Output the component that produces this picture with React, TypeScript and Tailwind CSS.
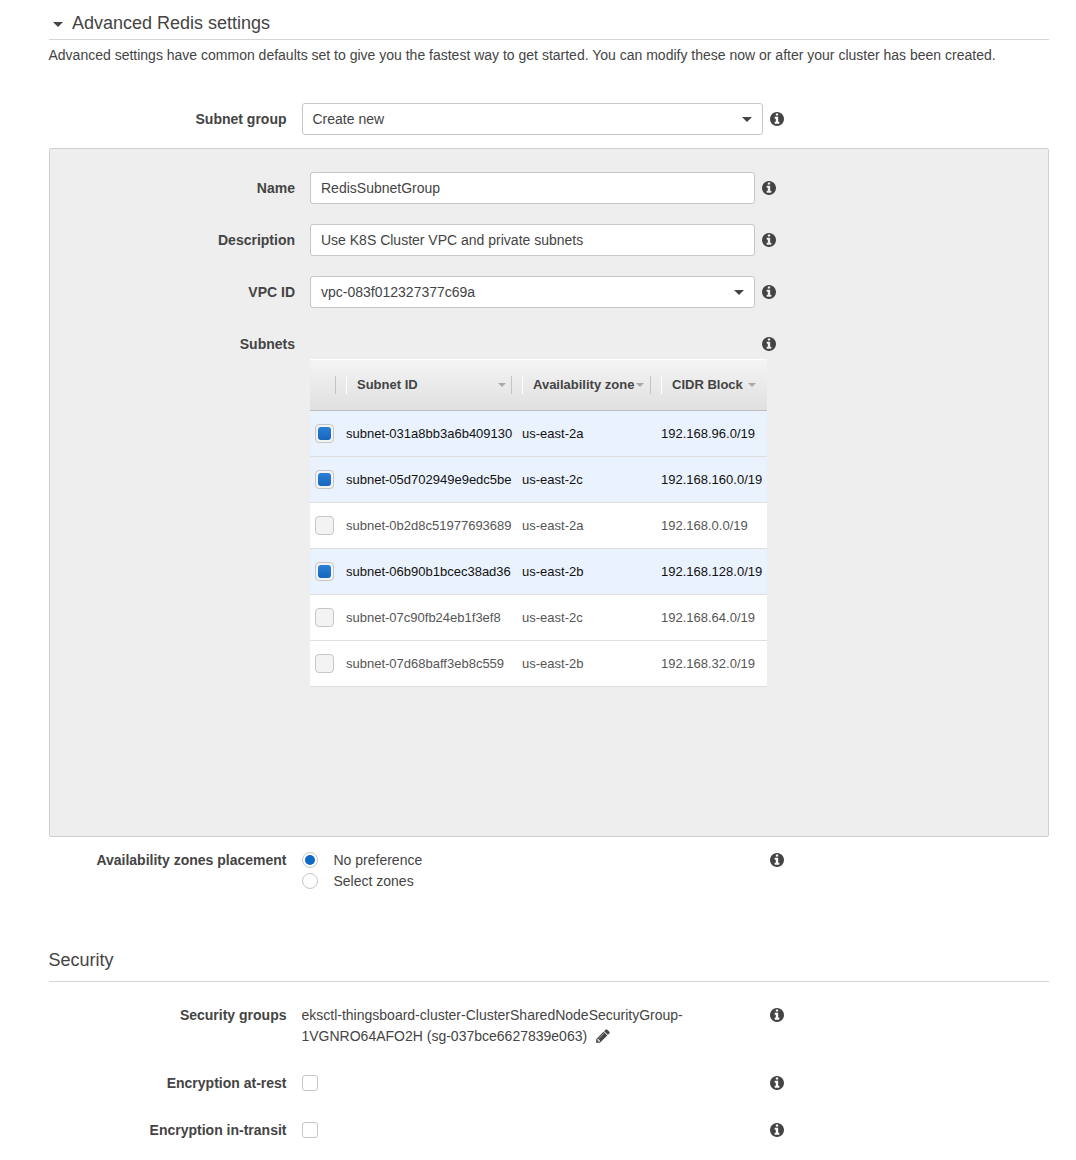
import React from "react";

const Info = () => (
  <svg viewBox="128 128 1536 1536" className="w-[14px] h-[14px] text-[#444] shrink-0" fill="currentColor">
    <path d="M1152 1376v-160q0-14-9-23t-23-9h-96v-512q0-14-9-23t-23-9h-320q-14 0-23 9t-9 23v160q0 14 9 23t23 9h96v320h-96q-14 0-23 9t-9 23v160q0 14 9 23t23 9h448q14 0 23-9t9-23zm-128-896v-160q0-14-9-23t-23-9h-192q-14 0-23 9t-9 23v160q0 14 9 23t23 9h192q14 0 23-9t9-23zm640 416q0 209-103 385.5t-279.5 279.5-385.5 103-385.5-103-279.5-279.5-103-385.5 103-385.5 279.5-279.5 385.5-103 385.5 103 279.5 279.5 103 385.5z" />
  </svg>
);

const Pencil = () => (
  <svg viewBox="0 0 1792 1792" className="ml-[8px] w-4 h-4 -mt-[2px] text-[#444] shrink-0" fill="currentColor">
    <path d="M491 1536l91-91-235-235-91 91v107h128v128h107zm523-928q0-22-22-22-10 0-17 7l-542 542q-7 7-7 17 0 22 22 22 10 0 17-7l542-542q7-7 7-17zm-54-192l416 416-832 832h-416v-416zm683 96q0 53-37 90l-166 166-416-416 166-165q36-38 90-38 53 0 91 38l235 234q37 39 37 91z" />
  </svg>
);

const Caret = ({ className }: { className: string }) => (
  <svg viewBox="0 0 10 5" className={className} fill="currentColor">
    <path d="M0 0h10L5 5z" />
  </svg>
);

const Field = ({ value, select }: { value: string; select?: boolean }) => (
  <div className="h-8 flex-1 flex items-center justify-between bg-white border border-[#c6c6c6] rounded-[3px] pl-[10px] pr-[10px] text-[14px] text-[#444]">
    <span>{value}</span>
    {select && <Caret className="w-[10px] h-[5px] text-[#444]" />}
  </div>
);

const PanelRow = ({ label, children }: { label: string; children: React.ReactNode }) => (
  <div className="flex items-center h-8">
    <div className="w-[245.5px] text-right font-bold text-[14px] text-[#444]">{label}</div>
    <div className="w-[445px] ml-[15px] flex">{children}</div>
    <div className="ml-[7px]"><Info /></div>
  </div>
);

const Row = ({ label, children, top }: { label: string; children: React.ReactNode; top: string }) => (
  <div className={`flex items-center h-5 ${top}`}>
    <div className="w-[238px] text-right font-bold text-[14px] text-[#444]">{label}</div>
    <div className="w-[461px] ml-[15px] flex items-center">{children}</div>
    <div className="ml-[7px]"><Info /></div>
  </div>
);

const Box = () => <div className="w-4 h-4 rounded-[3px] border border-[#c6c6c6] bg-white" />;

const subnets = [
  ["subnet-031a8bb3a6b409130", "us-east-2a", "192.168.96.0/19", true],
  ["subnet-05d702949e9edc5be", "us-east-2c", "192.168.160.0/19", true],
  ["subnet-0b2d8c51977693689", "us-east-2a", "192.168.0.0/19", false],
  ["subnet-06b90b1bcec38ad36", "us-east-2b", "192.168.128.0/19", true],
  ["subnet-07c90fb24eb1f3ef8", "us-east-2c", "192.168.64.0/19", false],
  ["subnet-07d68baff3eb8c559", "us-east-2b", "192.168.32.0/19", false],
] as const;

const HeadSep = () => <div className="h-[18px] w-px bg-[#c4c4c4]" />;

export default function App() {
  return (
    <div className="bg-white h-[1160px] overflow-hidden pt-[11px] pl-[48.5px] w-[1076px] text-[#444] font-['Liberation_Sans',Arial,sans-serif]">
      <div className="w-[1000px]">
        <div className="h-[29px] flex items-start border-b border-[#d5d5d5]">
          <Caret className="w-[10px] h-[5px] text-[#444] ml-[4.5px] mt-[11px]" />
          <span className="ml-[9px] text-[18px] leading-6">Advanced Redis settings</span>
        </div>
        <p className="mt-[5px] text-[14px] leading-5 whitespace-nowrap">
          Advanced settings have common defaults set to give you the fastest way to get started. You can modify these now or after your cluster has been created.
        </p>

        <div className="mt-[38px] flex items-center h-8">
          <div className="w-[238px] text-right font-bold text-[14px]">Subnet group</div>
          <div className="w-[461px] ml-[15px] flex"><Field value="Create new" select /></div>
          <div className="ml-[7px]"><Info /></div>
        </div>

        <div className="mt-[13px] h-[689px] bg-[#eeeeee] border border-[#cfcfcf] rounded-[2px] pt-[23px] flex flex-col">
          <div className="flex flex-col gap-5">
            <PanelRow label="Name"><Field value="RedisSubnetGroup" /></PanelRow>
            <PanelRow label="Description"><Field value="Use K8S Cluster VPC and private subnets" /></PanelRow>
            <PanelRow label="VPC ID"><Field value="vpc-083f012327377c69a" select /></PanelRow>
            <PanelRow label="Subnets"><div /></PanelRow>
          </div>
          <div className="ml-[260.5px] w-[457px] -mt-px text-[13px]">
            <div className="h-[52px] flex items-center border-t border-white border-b border-b-[#bdbdbd] bg-gradient-to-b from-[#f4f4f4] to-[#e0e0e0] font-bold text-[#444]">
              <div className="w-[36px] h-[18px] flex items-center">
                <div className="ml-[25px] h-[18px] w-px bg-[#c4c4c4]" />
              </div>
              <div className="w-[176px] h-[18px] flex items-center border-l border-white pl-[10px]">
                <span className="flex-1">Subnet ID</span>
                <Caret className="w-[8px] h-[4px] text-[#aaa] mr-[5px]" />
                <HeadSep />
                <div className="w-[10px]" />
              </div>
              <div className="w-[139px] h-[18px] flex items-center border-l border-white pl-[10px]">
                <span className="whitespace-nowrap">Availability zone</span>
                <Caret className="w-[8px] h-[4px] text-[#aaa] ml-[2px] mr-[6px]" />
                <HeadSep />
              </div>
              <div className="w-[106px] h-[18px] flex items-center border-l border-white pl-[10px]">
                <span className="whitespace-nowrap">CIDR Block</span>
                <Caret className="w-[8px] h-[4px] text-[#aaa] ml-[5px]" />
              </div>
            </div>
            {subnets.map(([id, az, cidr, on]) => (
              <div
                key={id}
                className={`h-[46px] flex items-center border-b border-[#dfdfdf] ${on ? "bg-[#eaf2fd] text-[#111]" : "bg-white text-[#555]"}`}
              >
                <div className="w-[36px] pl-[5px]">
                  <div className="w-[19px] h-[19px] rounded-[4px] border border-[#c6c6c6] bg-[#f3f3f3] flex items-center justify-center">
                    {on && <div className="w-[13px] h-[13px] rounded-[3px] bg-gradient-to-b from-[#2a7fd8] to-[#1766bd]" />}
                  </div>
                </div>
                <div className="w-[176px] whitespace-nowrap">{id}</div>
                <div className="w-[139px] whitespace-nowrap">{az}</div>
                <div className="w-[106px] whitespace-nowrap">{cidr}</div>
              </div>
            ))}
          </div>
        </div>

        <div className="mt-[13px] flex items-start text-[14px] leading-[21px]">
          <div className="w-[238px] text-right font-bold">Availability zones placement</div>
          <div className="w-[461px] ml-[15px]">
            <div className="flex items-center h-[21px]">
              <div className="w-4 h-4 -mt-px rounded-full border border-[#c6c6c6] bg-white flex items-center justify-center">
                <div className="w-[10px] h-[10px] rounded-full bg-[#0f69c5]" />
              </div>
              <span className="ml-[16px]">No preference</span>
            </div>
            <div className="flex items-center h-[21px]">
              <div className="w-4 h-4 -mt-px rounded-full border border-[#c6c6c6] bg-white" />
              <span className="ml-[16px]">Select zones</span>
            </div>
          </div>
          <div className="ml-[7px] h-5 flex items-center"><Info /></div>
        </div>

        <div className="mt-[56px] h-[34px] border-b border-[#d5d5d5] text-[18px] leading-6">Security</div>

        <div className="mt-[23px] flex items-start text-[14px] leading-[21px]">
          <div className="w-[238px] text-right font-bold">Security groups</div>
          <div className="w-[461px] ml-[15px]">
            <div>eksctl-thingsboard-cluster-ClusterSharedNodeSecurityGroup-</div>
            <div className="flex items-center">
              <span>1VGNRO64AFO2H (sg-037bce6627839e063)</span>
              <Pencil />
            </div>
          </div>
          <div className="ml-[7px] h-5 flex items-center"><Info /></div>
        </div>

        <Row label="Encryption at-rest" top="mt-[26px]"><Box /></Row>
        <Row label="Encryption in-transit" top="mt-[27px]"><Box /></Row>
      </div>
    </div>
  );
}
